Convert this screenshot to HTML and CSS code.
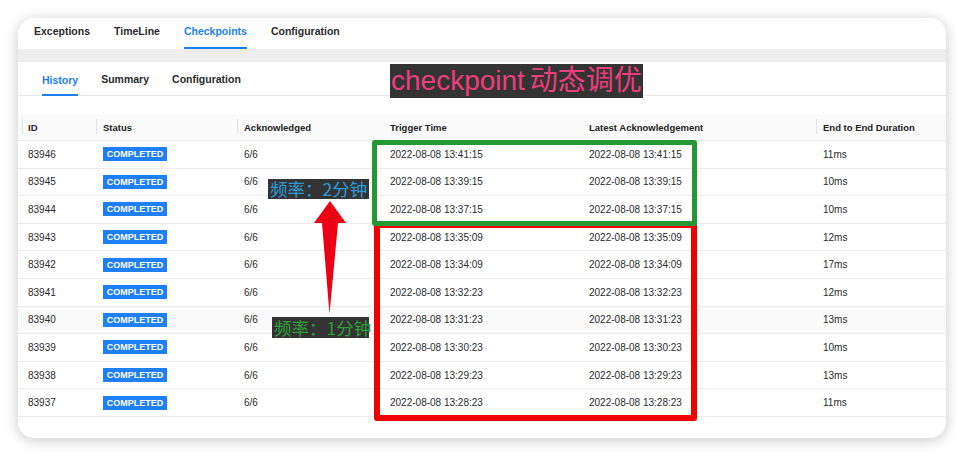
FILE: index.html
```html
<!DOCTYPE html>
<html>
<head>
<meta charset="utf-8">
<link rel="stylesheet" href="styles.css">
</head>
<body>
<div class="card">
  <nav class="tabs">
    <span class="tab">Exceptions</span>
    <span class="tab">TimeLine</span>
    <span class="tab active">Checkpoints</span>
    <span class="tab">Configuration</span>
  </nav>
  <div class="band"></div>
  <nav class="subtabs">
    <span class="tab active">History</span>
    <span class="tab">Summary</span>
    <span class="tab">Configuration</span>
  </nav>
  <div class="table">
    <div class="row head">
      <div class="cell first">ID</div>
      <div class="cell sep">Status</div>
      <div class="cell sep">Acknowledged</div>
      <div class="cell">Trigger Time</div>
      <div class="cell">Latest Acknowledgement</div>
      <div class="cell sep">End to End Duration</div>
    </div>
    <div class="row"><div class="cell first">83946</div><div class="cell"><span class="badge">COMPLETED</span></div><div class="cell">6/6</div><div class="cell">2022-08-08 13:41:15</div><div class="cell">2022-08-08 13:41:15</div><div class="cell">11ms</div></div>
    <div class="row"><div class="cell first">83945</div><div class="cell"><span class="badge">COMPLETED</span></div><div class="cell">6/6</div><div class="cell">2022-08-08 13:39:15</div><div class="cell">2022-08-08 13:39:15</div><div class="cell">10ms</div></div>
    <div class="row"><div class="cell first">83944</div><div class="cell"><span class="badge">COMPLETED</span></div><div class="cell">6/6</div><div class="cell">2022-08-08 13:37:15</div><div class="cell">2022-08-08 13:37:15</div><div class="cell">10ms</div></div>
    <div class="row"><div class="cell first">83943</div><div class="cell"><span class="badge">COMPLETED</span></div><div class="cell">6/6</div><div class="cell">2022-08-08 13:35:09</div><div class="cell">2022-08-08 13:35:09</div><div class="cell">12ms</div></div>
    <div class="row"><div class="cell first">83942</div><div class="cell"><span class="badge">COMPLETED</span></div><div class="cell">6/6</div><div class="cell">2022-08-08 13:34:09</div><div class="cell">2022-08-08 13:34:09</div><div class="cell">17ms</div></div>
    <div class="row"><div class="cell first">83941</div><div class="cell"><span class="badge">COMPLETED</span></div><div class="cell">6/6</div><div class="cell">2022-08-08 13:32:23</div><div class="cell">2022-08-08 13:32:23</div><div class="cell">12ms</div></div>
    <div class="row hover"><div class="cell first">83940</div><div class="cell"><span class="badge">COMPLETED</span></div><div class="cell">6/6</div><div class="cell">2022-08-08 13:31:23</div><div class="cell">2022-08-08 13:31:23</div><div class="cell">13ms</div></div>
    <div class="row"><div class="cell first">83939</div><div class="cell"><span class="badge">COMPLETED</span></div><div class="cell">6/6</div><div class="cell">2022-08-08 13:30:23</div><div class="cell">2022-08-08 13:30:23</div><div class="cell">10ms</div></div>
    <div class="row"><div class="cell first">83938</div><div class="cell"><span class="badge">COMPLETED</span></div><div class="cell">6/6</div><div class="cell">2022-08-08 13:29:23</div><div class="cell">2022-08-08 13:29:23</div><div class="cell">13ms</div></div>
    <div class="row"><div class="cell first">83937</div><div class="cell"><span class="badge">COMPLETED</span></div><div class="cell">6/6</div><div class="cell">2022-08-08 13:28:23</div><div class="cell">2022-08-08 13:28:23</div><div class="cell">11ms</div></div>
  </div>

  <div class="title-note">checkpoint 动态调优</div>
  <div class="box red"></div>
  <div class="box green"></div>
  <svg class="arrow" width="34" height="114" viewBox="0 0 34 114">
    <polygon points="16,0 32,22 24,22 15.5,113 8,22 0,22" fill="#ee0014"/>
  </svg>
  <div class="note note-blue">频率：2分钟</div>
  <div class="note note-green">频率：1分钟</div>
</div>
</body>
</html>
```

FILE: styles.css
```css
* { box-sizing: border-box; }
html, body { margin: 0; padding: 0; background: #ffffff; }
body {
  padding: 18px;
  font-family: "Liberation Sans", Arial, "Noto Sans CJK SC", sans-serif;
  color: #2b2b2b;
}
.card {
  position: relative;
  width: 928px;
  height: 420px;
  background: #ffffff;
  border-radius: 16px;
  box-shadow: 0 2px 14px rgba(0, 0, 0, 0.22);
  overflow: hidden;
}
.tabs {
  display: flex;
  gap: 24px;
  height: 31px;
  padding-left: 16px;
}
.tab {
  display: flex;
  align-items: center;
  font-size: 10.5px;
  font-weight: bold;
  color: #2b2b2b;
  border-bottom: 2px solid transparent;
}
.tabs .tab { padding-bottom: 3px; }
.tab.active {
  color: #1a7ff0;
  border-bottom-color: #1a7ff0;
}
.band {
  height: 13px;
  background: #eeeeee;
}
.subtabs {
  display: flex;
  gap: 23px;
  height: 34px;
  padding-left: 24px;
  border-bottom: 1px solid #e6e6e6;
}
.subtabs .tab { padding-top: 3px; }
.subtabs .tab.active { margin-bottom: -1px; }
.table {
  margin-top: 18px;
}
.row {
  display: grid;
  grid-template-columns: 78px 141px 146px 199px 234px 130px;
  align-items: center;
  height: 27.6px;
  border-bottom: 1px solid #ebebeb;
  font-size: 10px;
  color: #2b2b2b;
}
.row.head {
  height: 27px;
  background: #fafafa;
  font-size: 9.5px;
  font-weight: bold;
  color: #222;
}
.row.hover { background: #fafafa; }
.cell {
  position: relative;
  padding-left: 7px;
  white-space: nowrap;
}
.cell.first { padding-left: 10px; }
.head .cell.first::before,
.head .cell.sep::before {
  content: "";
  position: absolute;
  left: 0;
  top: -3px;
  width: 1px;
  height: 15px;
  background: #e2e2e2;
}
.head .cell.first::before { left: 4px; }
.badge {
  display: inline-block;
  width: 64px;
  height: 14px;
  line-height: 14px;
  text-align: center;
  background: #1f7ff5;
  color: #ffffff;
  font-size: 9px;
  font-weight: bold;
  vertical-align: middle;
}
.title-note {
  position: absolute;
  left: 372px;
  top: 46px;
  width: 253px;
  height: 34px;
  line-height: 34px;
  padding-left: 1px;
  background: #333333;
  color: #ec3d7c;
  font-size: 28px;
  word-spacing: -3px;
  white-space: nowrap;
}
.box {
  position: absolute;
  border-radius: 3px;
}
.box.green {
  left: 354px;
  top: 122px;
  width: 325px;
  height: 86px;
  border: 5px solid #229933;
}
.box.red {
  left: 356px;
  top: 204px;
  width: 323px;
  height: 199px;
  border: 6px solid #f00000;
}
.arrow {
  position: absolute;
  left: 296px;
  top: 183px;
}
.note {
  position: absolute;
  height: 20px;
  line-height: 20px;
  background: #333333;
  font-family: "Noto Sans CJK SC", sans-serif;
  font-size: 17.5px;
  white-space: nowrap;
  padding-left: 2px;
}
.note-blue {
  left: 250px;
  top: 161px;
  width: 101px;
  color: #2a9bd8;
}
.note-green {
  left: 254px;
  top: 299px;
  width: 97px;
  height: 21px;
  line-height: 21px;
  color: #2d9e3a;
}
```
